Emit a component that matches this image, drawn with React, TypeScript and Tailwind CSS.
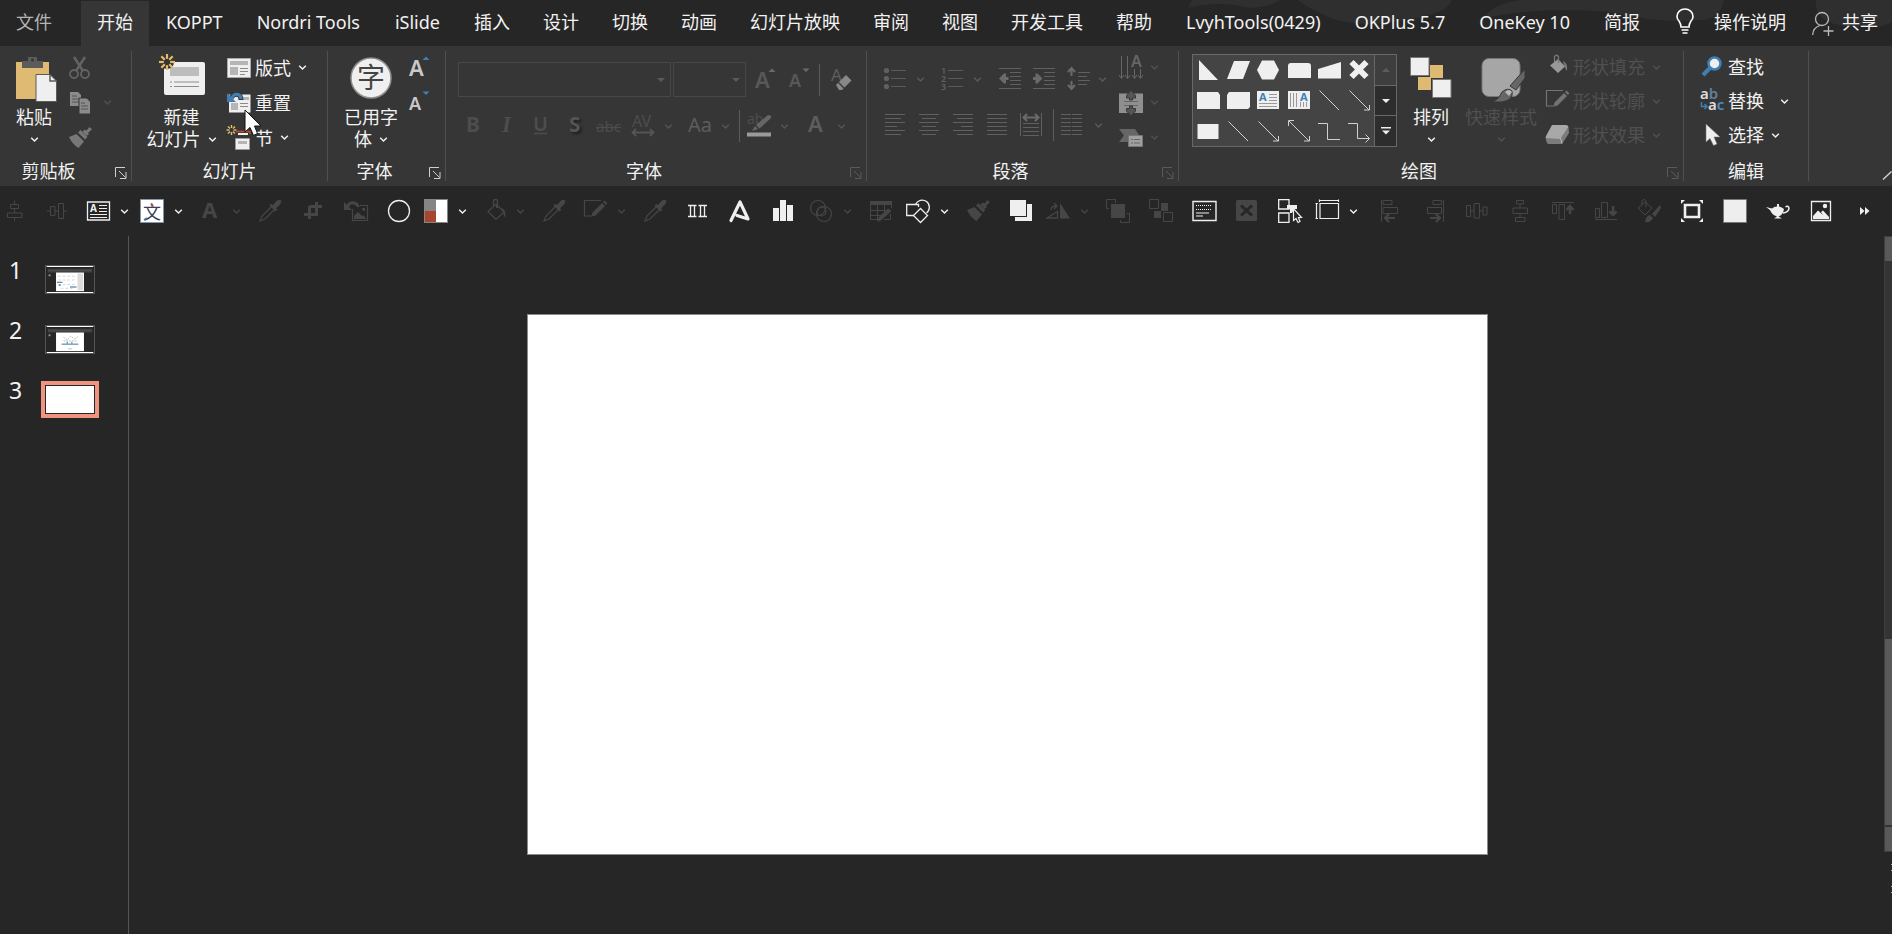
import { useState } from "react";
import type { ReactNode } from "react";

const TABS = [
  "文件", "开始", "KOPPT", "Nordri Tools", "iSlide", "插入", "设计", "切换", "动画", "幻灯片放映",
  "审阅", "视图", "开发工具", "帮助", "LvyhTools(0429)", "OKPlus 5.7", "OneKey 10", "简报",
];

const WIDE_TABS = ["Nordri Tools", "iSlide", "LvyhTools(0429)", "OneKey 10"];

interface IconProps {
  children: ReactNode;
  size?: number;
  w?: number;
  h?: number;
  className?: string;
}

function Icon({ children, size = 24, w, h, className = "" }: IconProps) {
  const width = w ?? size;
  const height = h ?? size;
  return (
    <svg
      width={width}
      height={height}
      viewBox={`0 0 ${width} ${height}`}
      fill="none"
      aria-hidden="true"
      className={`shrink-0 overflow-visible ${className}`}
    >
      {children}
    </svg>
  );
}

function Chevron({ className = "" }: { className?: string }) {
  return (
    <Icon w={9} h={5} className={className}>
      <path d="M1.2 .8L4.5 4L7.8 .8" stroke="currentColor" strokeWidth="1.5" />
    </Icon>
  );
}

/* ---------- shared glyphs ---------- */

const lines = (rows: [number, number, number][]) => (
  <path d={rows.map(([x1, x2, y]) => `M${x1} ${y}H${x2}`).join("")} stroke="currentColor" />
);

const eyedropper = (
  <>
    <path d="M14 7L4 17L2 22L7 20L17 10" stroke="currentColor" strokeWidth="1.2" />
    <path d="M11.5 6.5L13.3 4.7L14.8 6.2L18.5 2Q21-.2 23 1.3Q24.2 3.3 22 5.5L18 9.2L19.3 10.7L17.5 12.5Z" fill="currentColor" />
  </>
);

const brush = (
  <>
    <path d="M1 11L8.5 8L16 15.5L10.5 22Q4 18 1 11Z" fill="currentColor" />
    <path d="M10 6.5L12.5 4L19.5 11L17 13.5Z" fill="currentColor" />
    <path d="M14.5 5.5L17 3.5L18.3 4.8L21.5 1L24 3.2L20 7L21 8.5L18.5 9.8Z" fill="currentColor" />
  </>
);

const bucket = (
  <>
    <path d="M10 5L18 13L10 20.5L2 12.5Z" stroke="currentColor" strokeWidth="1.2" />
    <path d="M7.5 7V2Q7.5 .5 9.5 .5T11.5 2V9M10.5 6V9" stroke="currentColor" strokeWidth="1.3" />
    <path d="M15 8.5Q20 10 19.5 19L17.5 15.5V12Z" fill="currentColor" />
  </>
);

const outlinePencil = (
  <>
    <path d="M18 1.5H1.5V17H9" stroke="currentColor" strokeWidth="1.2" />
    <path d="M8.5 17.5L9.5 13.5L19 4L22 7L12.5 16.5ZM20 3L21.5 1.5L24.3 4.3L23 6Z" fill="currentColor" />
  </>
);

/* ---------- quick access bar ---------- */

interface QuickItem {
  label: string;
  icon: ReactNode;
  on?: boolean;
  drop?: boolean;
  gap?: boolean;
}

const QUICK: QuickItem[] = [
  {
    label: "垂直居中",
    icon: <path d="M12.5 1.5V5M12.5 10V14M12.5 19V22M8.5 5.5H16.5V9.5H8.5ZM5.5 14H20V18.5H5.5Z" stroke="currentColor" />,
  },
  {
    label: "横向分布",
    icon: <path d="M2 12H5M10 12H13.5M19 12H22M5.5 7.5H10V16.5H5.5ZM13.5 4.5H18.5V19.5H13.5Z" stroke="currentColor" />,
  },
  {
    label: "文本框", on: true, drop: true, gap: true,
    icon: (
      <>
        <path d="M1.5 3H23.5V21H1.5Z" stroke="currentColor" strokeWidth="1.3" />
        <text x="4" y="12.5" fontSize="10" fontWeight="700" fill="currentColor">A</text>
        {lines([[13, 21, 6.5], [13, 21, 9.5], [13, 21, 12.5], [4, 21, 15.5], [4, 21, 18.5]])}
      </>
    ),
  },
  {
    label: "文字", on: true, drop: true,
    icon: (
      <>
        <path d="M.5 .5H23.5V23.5H.5Z" fill="#fff" stroke="#8a94a8" />
        <text x="3" y="20" fontSize="18" fill="#33415c">文</text>
        <path d="M11 5L13 8" stroke="#c4472c" strokeWidth="1.5" />
        <path d="M7 19L4.5 20.5" stroke="#3f7fb5" strokeWidth="1.5" />
      </>
    ),
  },
  {
    label: "字体颜色", drop: true, gap: true,
    icon: <text x="4" y="19" fontSize="22" fontWeight="700" fill="currentColor">A</text>,
  },
  { label: "取色器", icon: eyedropper },
  {
    label: "裁剪",
    icon: <path d="M3 15.5H15.5V7M8.5 7V20M8.5 7.5H21M15.5 3V16" stroke="currentColor" strokeWidth="3" />,
  },
  {
    label: "重置图片",
    icon: (
      <>
        <path d="M3 9Q5 3 10 4Q14 5 14 8" stroke="currentColor" strokeWidth="3" />
        <path d="M0 3V11H8Z" fill="currentColor" />
        <path d="M16 6.5H23.5V21.5H8.5V10" stroke="currentColor" strokeWidth="1.2" />
        <path d="M10 20V17L14 13L18 17L19 16L22 19V20ZM18 9H21V12H19Z" fill="currentColor" />
      </>
    ),
  },
  { label: "椭圆", on: true, icon: <circle cx="12" cy="12" r="10.5" stroke="currentColor" strokeWidth="1.3" /> },
  {
    label: "配色", on: true, drop: true,
    icon: (
      <>
        <path d="M0 0H24V24H0Z" fill="#858585" />
        <path d="M12 1H23V23H12Z" fill="#fff" />
        <path d="M1 12H12V23H1Z" fill="#a8452f" />
      </>
    ),
  },
  { label: "形状填充", drop: true, gap: true, icon: <g transform="translate(4 0)">{bucket}</g> },
  { label: "取填充色", icon: eyedropper },
  { label: "形状轮廓", drop: true, gap: true, icon: outlinePencil },
  { label: "取轮廓色", icon: eyedropper },
  {
    label: "等距", on: true,
    icon: <path d="M2 6.5H10.5M12.5 6.5H21M2 17.5H10.5M12.5 17.5H21M4.5 6V18M8.500 6V18M14.500 6V18M18.500 6V18" stroke="currentColor" strokeWidth="1.3" />,
  },
  {
    label: "艺术字", on: true,
    icon: <path d="M2 21.5L11 3L19 20L8 16.5" stroke="currentColor" strokeWidth="3.2" strokeLinejoin="round" strokeLinecap="round" />,
  },
  {
    label: "图表", on: true,
    icon: <path d="M1 9H7V22H1ZM8 1H14V22H8ZM15 6H21V22H15Z" fill="currentColor" />,
  },
  {
    label: "合并形状", drop: true,
    icon: (
      <g stroke="currentColor" strokeWidth="1.2">
        <circle cx="9" cy="9" r="7.5" />
        <circle cx="15" cy="15" r="7.5" />
        <circle cx="12.5" cy="12.5" r="4.5" />
      </g>
    ),
  },
  {
    label: "绘制表格",
    icon: (
      <>
        <path d="M1 2H23V6H1Z" fill="currentColor" />
        <path d="M1.5 2.5V20.5H9M8.5 6V20M15.5 6V13M22.5 6V9M1 11.5H17M1 16.5H12M21.5 15V20.5H15" stroke="currentColor" />
        <path d="M8 23L9.5 18.5L19 9.5L22.5 12L12.5 21Z" fill="currentColor" />
      </>
    ),
  },
  {
    label: "形状", on: true, drop: true,
    icon: (
      <>
        <path d="M8 16.5H.7V5.5H12.5V8" stroke="currentColor" strokeWidth="1.3" />
        <path d="M9.5 5.5A7.2 7.2 0 1 1 20.5 14" stroke="currentColor" strokeWidth="1.3" />
        <path d="M14.5 9.5L21.5 16.5L14.5 23.5L7.5 16.5Z" stroke="currentColor" strokeWidth="1.3" />
      </>
    ),
  },
  { label: "格式刷", icon: brush },
  {
    label: "上移一层", on: true,
    icon: (
      <>
        <path d="M18 5H23V22H6V18H18Z" fill="currentColor" />
        <path d="M1 1H17V17H1Z" fill="currentColor" />
      </>
    ),
  },
  {
    label: "旋转", drop: true,
    icon: (
      <>
        <path d="M14 4L24 19.5H14Z" fill="currentColor" />
        <path d="M1 19L11.5 12.5V19ZM5 11Q5 7 10 7M8 4L11 7L8 10" stroke="currentColor" strokeWidth="1.3" />
      </>
    ),
  },
  {
    label: "组合",
    icon: (
      <>
        <path d="M5 5H19V19H5Z" fill="currentColor" />
        <path d="M3 9.5H.5V.5H9.5V4M21 14.5H23.5V23.5H14.5V21" stroke="currentColor" />
      </>
    ),
  },
  {
    label: "取消组合",
    icon: (
      <>
        <path d="M12 4H19V12H12ZM5 12H12V19H5Z" fill="currentColor" />
        <path d="M.5 .5H9.5V9.5H.5ZM14.5 13.5H23.5V22.5H14.5Z" stroke="currentColor" />
      </>
    ),
  },
  {
    label: "选项", on: true,
    icon: (
      <>
        <path d="M1 2.5H24V21.5H1Z" stroke="currentColor" strokeWidth="1.4" />
        <path d="M4 6.5H20M4 10.5H20" stroke="currentColor" strokeDasharray="1 1" />
        <path d="M4 14H17M4 17H11" stroke="currentColor" />
      </>
    ),
  },
  {
    label: "删除",
    icon: (
      <>
        <rect x="1" y="1" width="21" height="21" rx="1.5" fill="currentColor" />
        <path d="M6 6.5L17 16.5M17 6.5L6 16.5" stroke="#262626" strokeWidth="3" />
      </>
    ),
  },
  {
    label: "选择窗格", on: true,
    icon: (
      <>
        <path d="M.7 .7H11V10H.7ZM.7 14H11V23.3H.7Z" stroke="currentColor" strokeWidth="1.3" />
        <path d="M9 6H19V10H16L14 14H12V10H9Z" fill="currentColor" />
        <path d="M15.5 9.5V21.5L18 19.5L20 23.5L22 22.5L20.5 18.5H23.5Z" fill="#262626" stroke="currentColor" strokeWidth="1.2" />
      </>
    ),
  },
  {
    label: "尺寸", on: true, drop: true,
    icon: (
      <path d="M5 4.5H23.5V19.5H5ZM4.5 .5V3M23.5 .5V3M5 1.5H23M.5 4.5H3M.5 19.5H3M1.5 4.5V19.5" stroke="currentColor" strokeWidth="1.2" />
    ),
  },
  {
    label: "左对齐", gap: true,
    icon: (
      <>
        <path d="M2.5 1V23M4 1.5H13V5.5H4ZM4 8.5H18.5V14.5H4Z" stroke="currentColor" />
        <path d="M16 19H6M10 15L6 19L10 23" stroke="currentColor" strokeWidth="2.2" />
      </>
    ),
  },
  {
    label: "右对齐",
    icon: (
      <>
        <path d="M21.5 1V23M19.5 1.5H11V5.5H19.5ZM19.5 8.5H5.5V14.5H19.5Z" stroke="currentColor" />
        <path d="M8 19H18M14 15L18 19L14 23" stroke="currentColor" strokeWidth="2.2" />
      </>
    ),
  },
  {
    label: "水平分布",
    icon: (
      <path d="M1.5 6.5H5.5V17.5H1.5ZM9 4.5H14.5V19H9ZM18 8H22V16H18ZM5.5 12H9M14.5 12H18" stroke="currentColor" />
    ),
  },
  {
    label: "垂直分布",
    icon: (
      <path d="M8.5 1.5H15.5V5H8.5ZM5 9H19.5V14.5H5ZM7.5 18.5H17V22.5H7.5ZM12 5V9M12 14.5V18.5" stroke="currentColor" />
    ),
  },
  {
    label: "顶端对齐",
    icon: (
      <>
        <path d="M1 3.5H23M1.5 5.5H5.5V14.5H1.5ZM8 5.5H13.5V20.5H8Z" stroke="currentColor" />
        <path d="M19 15V7M15.5 11L19 7L22.5 11" stroke="currentColor" strokeWidth="2.5" />
      </>
    ),
  },
  {
    label: "底端对齐",
    icon: (
      <>
        <path d="M1 20.5H23M1.5 9.5H5.5V18.5H1.5ZM7.5 3.5H13.5V18.5H7.5Z" stroke="currentColor" />
        <path d="M19 7V16M15.5 12.5L19 16L22.5 12.5" stroke="currentColor" strokeWidth="2.5" />
      </>
    ),
  },
  {
    label: "复制格式",
    icon: (
      <>
        <path d="M8 3L15 9L8 16L1 9ZM5 6V1.500Q7.500 -1 9 2V8" stroke="currentColor" />
        <path d="M8 23Q9 17 13 16L16 19Q14 24 8 23ZM15 15L23 6L24 9L18 18Z" fill="currentColor" />
      </>
    ),
  },
  {
    label: "适应窗口", on: true,
    icon: (
      <>
        <path d="M5 6H19V18H5Z" stroke="currentColor" strokeWidth="2.6" />
        <path d="M1 1H5L1 5ZM23 1H19L23 5ZM1 23H5L1 19ZM23 23H19L23 19Z" fill="currentColor" />
      </>
    ),
  },
  {
    label: "矩形", on: true,
    icon: <path d="M.5 .5H23.5V23.5H.5Z" fill="#eee" stroke="#777" />,
  },
  {
    label: "神灯", on: true,
    icon: (
      <>
        <path d="M0 8L6 9.5Q8 7.500 11 7.500V5H13V7.500Q16 8 18 10Q17 16 12.500 17.500L16 19.500H8L11 17.500Q6 16 4 11Z" fill="currentColor" />
        <path d="M17 14Q23 13 23 9Q22 6 19.5 8" stroke="currentColor" strokeWidth="1.5" />
      </>
    ),
  },
  {
    label: "图片", on: true,
    icon: (
      <>
        <path d="M2.5 2.5H21.5V21.5H2.5Z" stroke="currentColor" strokeWidth="1.3" />
        <path d="M4 20V17L9 11.5L14 16L12 13L14 11.5L20 18V20Z" fill="currentColor" />
        <circle cx="16" cy="7" r="2.2" fill="currentColor" />
      </>
    ),
  },
  {
    label: "更多", on: true,
    icon: <path d="M8 8L12.5 12L8 16ZM13 8L17.5 12L13 16Z" fill="currentColor" />,
  },
];

function QuickBar() {
  return (
    <div className="flex h-[50px] shrink-0 items-center overflow-hidden bg-[#262626]">
      <div className="-ml-2 flex shrink-0 items-center">
        {QUICK.map((item) => (
          <button
            key={item.label}
            aria-label={item.label}
            disabled={!item.on}
            className={`flex h-8 shrink-0 items-center ${item.on ? "text-[#efefef]" : "text-[#464646]"} ${
              item.drop ? "w-[54px] gap-[10px] pl-1" : "w-[43px] justify-center"
            } ${item.gap ? "ml-1" : ""}`}
          >
            <Icon>{item.icon}</Icon>
            {item.drop && <Chevron />}
          </button>
        ))}
      </div>
    </div>
  );
}

/* ---------- ribbon building blocks ---------- */

interface GroupProps {
  label: string;
  className: string;
  labelClassName?: string;
  launcher?: "on" | "off";
  children: ReactNode;
}

function Group({ label, className, labelClassName = "", launcher, children }: GroupProps) {
  return (
    <section aria-label={label} className={`flex shrink-0 ${className}`}>
      <div className="flex min-w-0 flex-1 flex-col">
        <div className="flex h-[112px] pt-1">{children}</div>
        <div className="flex h-[26px] items-center">
          <span className={`flex-1 text-center ${labelClassName}`}>{label}</span>
          {launcher && (
            <button
              aria-label={`${label}设置`}
              className={`flex w-6 justify-end pt-1 pr-1 ${launcher === "on" ? "text-[#d0d0d0]" : "text-[#5a5a5a]"}`}
            >
              <Icon size={12}>
                <path d="M.5 10V.5H10M4 4L10.5 10.5M11 5V11.5H5" stroke="currentColor" />
              </Icon>
            </button>
          )}
        </div>
      </div>
      <div className="my-[5px] w-px bg-[#505050]" />
    </section>
  );
}

interface BigButtonProps {
  icon: ReactNode;
  lines: [string, string?];
  className: string;
  disabled?: boolean;
}

function BigButton({ icon, lines: [first, second], className, disabled }: BigButtonProps) {
  return (
    <button
      disabled={disabled}
      className={`flex shrink-0 flex-col items-center pt-1 leading-[22px] ${disabled ? "text-[#505050]" : ""} ${className}`}
    >
      <span className="flex h-[52px]">
        <Icon size={46}>{icon}</Icon>
      </span>
      <span className="whitespace-nowrap">{first}</span>
      <span className="flex h-[22px] items-center gap-[7px]">
        {second}
        <Chevron />
      </span>
    </button>
  );
}

interface RowButtonProps {
  icon: ReactNode;
  label?: string;
  name?: string;
  drop?: boolean;
  disabled?: boolean;
  className?: string;
}

function RowButton({ icon, label, name, drop, disabled, className = "h-[35px] gap-[7px]" }: RowButtonProps) {
  return (
    <button
      aria-label={name}
      disabled={disabled}
      className={`flex items-center whitespace-nowrap ${disabled ? "text-[#505050]" : ""} ${className}`}
    >
      <span className="flex items-center gap-1">
        <Icon>{icon}</Icon>
        {label}
      </span>
      {drop && <Chevron />}
    </button>
  );
}

interface ToolProps {
  name: string;
  children: ReactNode;
  drop?: boolean;
  className?: string;
}

function Tool({ name, children, drop, className = "" }: ToolProps) {
  return (
    <button
      aria-label={name}
      disabled
      className={`flex h-[34px] shrink-0 items-center gap-[9px] ${className || (drop ? "w-[57px]" : "w-[34px]")}`}
    >
      <Icon>{children}</Icon>
      {drop && <Chevron />}
    </button>
  );
}

function Divider() {
  return <div className="mr-[7px] h-8 w-px shrink-0 bg-[#5c5c5c]" />;
}

function ComboBox({ name, className }: { name: string; className: string }) {
  return (
    <div className={`relative ${className}`}>
      <select aria-label={name} disabled className="h-[35px] w-full appearance-none border border-[#474747] bg-transparent" />
      <Icon w={8} h={4} className="absolute top-4 right-[6px]">
        <path d="M0 0H8L4 4Z" fill="#5a5a5a" />
      </Icon>
    </div>
  );
}

/* ---------- ribbon groups ---------- */

function ClipboardGroup() {
  return (
    <Group label="剪贴板" launcher="on" className="w-[132px]" labelClassName="pr-[10px]">
      <BigButton
        className="w-[68px]"
        lines={["粘贴"]}
        icon={
          <>
            <path d="M5 8H38V45H5Z" fill="#dfba73" />
            <path d="M11 7H17V3H26V7H32V14H11Z" fill="#5b5b5b" />
            <circle cx="21.5" cy="6" r="1.5" fill="#363636" />
            <path d="M25 20.5H39L45.5 27V47.5H25Z" fill="#efefef" stroke="#5b5b5b" />
            <path d="M39 21V27H45" stroke="#5b5b5b" strokeWidth="1.5" />
          </>
        }
      />
      <div className="flex flex-col">
        <RowButton
          name="剪切"
          disabled
          icon={
            <g stroke="#636363">
              <path d="M6 1L15 15M17 1L8 15" strokeWidth="2.5" />
              <circle cx="6" cy="18" r="4" strokeWidth="1.8" />
              <circle cx="17" cy="18" r="4" strokeWidth="1.8" />
            </g>
          }
        />
        <RowButton
          name="复制"
          disabled
          drop
          className="h-[35px] gap-[11px]"
          icon={
            <>
              <path d="M2 1H10L13 4V15H2Z" fill="#8b8b8b" />
              <path d="M4 5H9M4 8H11M4 11H11" stroke="#555" />
              <path d="M11 7H19L22.5 11V23H11Z" fill="#8b8b8b" stroke="#363636" />
              <path d="M13 12H17M13 15H20M13 18H20" stroke="#555" />
            </>
          }
        />
        <RowButton name="格式刷" disabled icon={<g color="#777">{brush}</g>} />
      </div>
    </Group>
  );
}

const burst = (x: number, y: number, r: number) => (
  <g transform={`translate(${x} ${y})`} stroke="#e6bd6d" strokeWidth={r > 5 ? 2.2 : 1.4}>
    {[0, 45, 90, 135, 180, 225, 270, 315].map((a) => (
      <path key={a} d={`M0 ${-r * 0.4}V${-r}`} transform={`rotate(${a})`} />
    ))}
  </g>
);

function SlidesGroup() {
  return (
    <Group label="幻灯片" className="w-[196px]">
      <BigButton
        className="ml-1 w-[91px]"
        lines={["新建", "幻灯片"]}
        icon={
          <>
            <rect x="5" y="8" width="41" height="33" rx="2" fill="#efefef" />
            <path d="M11 13H40V22H11Z" fill="#bdbdbd" />
            <path d="M11 28H13M15 28H40M11 32.5H13M15 32.5H40" stroke="#8c8c8c" />
            <circle cx="8" cy="8" r="7" fill="#363636" />
            {burst(8, 8, 8)}
          </>
        }
      />
      <div className="relative flex flex-col">
        <RowButton
          label="版式"
          drop
          icon={
            <>
              <path d="M.5 2.5H23.5V21.5H.5Z" fill="#efefef" stroke="#aaa" />
              <path d="M3 5H21V9H3ZM3 11H11V19H3Z" fill="#b5b5b5" />
              <path d="M13 12.5H21M13 15.5H21M13 18.5H18" stroke="#8c8c8c" />
            </>
          }
        />
        <RowButton
          label="重置"
          icon={
            <>
              <path d="M2 3.5H23.5V21.5H2Z" fill="#efefef" />
              <path d="M15 6H22V9H15ZM4 12H11V19H4Z" fill="#b5b5b5" />
              <path d="M13 12.5H21M13 15.5H21" stroke="#8c8c8c" />
              <path d="M3 9Q6 2 11 3.5Q14 4.5 14 9" stroke="#363636" strokeWidth="5" />
              <path d="M4 8Q7 2 11 3.5Q14 4.5 14 8" stroke="#3f7fb5" strokeWidth="3" />
              <path d="M0 2V11H9Z" fill="#3f7fb5" />
            </>
          }
        />
        <RowButton
          label="节"
          drop
          icon={
            <>
              {burst(4.5, 4, 5)}
              <path d="M9 5.5H23V8" stroke="#c4472c" strokeWidth="1.5" />
              <path d="M11 7H21V9H11Z" fill="#efefef" />
              <path d="M8.5 12.5H22.5V23.5H8.5Z" fill="#efefef" stroke="#999" />
              <path d="M11 15H20V18H11Z" fill="#b5b5b5" />
            </>
          }
        />
        {/* mouse pointer hovering over the reset button */}
        <svg width="18" height="28" viewBox="0 0 18 28" aria-hidden="true" className="absolute top-[59px] left-[17px]">
          <path d="M1 1V23L6 18.5L9.5 26.5L13.5 24.5L10.5 17H17Z" fill="#fff" stroke="#111" />
        </svg>
      </div>
    </Group>
  );
}

const sizedA = (up: boolean, blue: boolean) => (
  <>
    <text x="0" y={up ? 20 : 19} fontSize={up ? 22 : 18} fontWeight="600" fill={blue ? "#c8c8c8" : "#585858"}>A</text>
    <path d={up ? "M13.5 4L17 .5L20.5 4Z" : "M13.5 .5L17 4L20.5 .5Z"} fill={blue ? "#3f7fb5" : "#6a6a6a"} />
  </>
);

function UsedFontsGroup() {
  return (
    <Group label="字体" launcher="on" className="w-[118px]">
      <BigButton
        className="ml-[5px] w-[76px]"
        lines={["已用字", "体"]}
        icon={
          <>
            <circle cx="23" cy="24" r="20" fill="#efefef" stroke="#8e8e8e" strokeWidth="1.5" />
            <text x="9" y="34" fontSize="28" fill="#444">字</text>
          </>
        }
      />
      <div className="flex flex-col">
        <RowButton name="增大字号" icon={sizedA(true, true)} />
        <RowButton name="减小字号" icon={sizedA(false, true)} />
      </div>
    </Group>
  );
}

function FontGroup() {
  return (
    <Group label="字体" launcher="off" className="w-[421px]">
      <div className="flex flex-col gap-3 pt-3 pl-3 text-[#555]">
        <div className="flex items-center gap-[2px]">
          <ComboBox name="字体名称" className="w-[213px]" />
          <ComboBox name="字号" className="w-[73px]" />
          <div className="ml-[7px] flex items-center">
            <Tool name="增大字号">{sizedA(true, false)}</Tool>
            <Tool name="减小字号" className="w-[30px]">{sizedA(false, false)}</Tool>
            <Divider />
            <Tool name="清除格式" className="ml-1 w-6">
              <text x="0" y="13" fontSize="17" fill="#5f5f5f">A</text>
              <path d="M5 17L15 7L20.5 12.5L11 22H8Z" fill="#888" />
              <path d="M7.5 14.5L13.5 20.5" stroke="#363636" strokeWidth="1.2" />
            </Tool>
          </div>
        </div>
        <div className="flex items-center pl-[3px]">
          <Tool name="加粗"><text x="5" y="18" fontSize="21" fontWeight="700" fill="#4d4d4d">B</text></Tool>
          <Tool name="倾斜">
            <text x="7" y="18" fontSize="23" fontWeight="700" fontStyle="italic" fontFamily="Liberation Serif, serif" fill="#4d4d4d">I</text>
          </Tool>
          <Tool name="下划线">
            <text x="4" y="17" fontSize="20" fontWeight="600" fill="#4d4d4d">U</text>
            <path d="M5 19.5H18" stroke="#4d4d4d" strokeWidth="1.5" />
          </Tool>
          <Tool name="阴影">
            <text x="6" y="18" fontSize="21" fontWeight="700" fill="#555" className="drop-shadow-[2px_2px_1px_#1f1f1f]">S</text>
          </Tool>
          <Tool name="删除线">
            <text x="-1" y="18" fontSize="15" fill="#4d4d4d">abc</text>
            <path d="M-1 13.5H24" stroke="#4d4d4d" />
          </Tool>
          <Tool name="字符间距" drop>
            <text x="1" y="13" fontSize="16" fill="#4d4d4d">AV</text>
            <path d="M2 18.5H22M5 15L1.5 18.5L5 22M19 15L22.5 18.5L19 22" stroke="#555" strokeWidth="1.8" />
          </Tool>
          <Tool name="更改大小写" drop className="w-[51px]">
            <text x="0" y="18" fontSize="20" fill="#5d5d5d">Aa</text>
          </Tool>
          <Divider />
          <Tool name="突出显示" drop>
            <text x="0" y="10" fontSize="14" fill="#4d4d4d">ab</text>
            <path d="M5 17L8 12L11 15ZM9 11L21 1Q25 1 24 4L12.5 14.5Z" fill="#666" />
            <path d="M0 20.500H24" stroke="#9a9a9a" strokeWidth="4" />
          </Tool>
          <Tool name="字体颜色" drop>
            <text x="4" y="18" fontSize="22" fontWeight="600" fill="#5d5d5d">A</text>
          </Tool>
        </div>
      </div>
    </Group>
  );
}

const paraLines = (widths: [number, number][]) => (
  <path d={widths.map(([a, b], i) => `M${a} ${1.5 + i * 4}H${b}`).join("")} stroke="#606060" />
);

function ParagraphGroup() {
  return (
    <Group label="段落" launcher="off" className="w-[312px]">
      <div className="flex w-[252px] flex-col gap-3 pt-3 pl-4 text-[#5a5a5a]">
        <div className="flex items-center">
          <Tool name="项目符号" drop>
            <path d="M8 3.5H23M8 11.5H23M8 19.5H23" stroke="#5a5a5a" />
            <g fill="#606060">
              <circle cx="3.5" cy="3.5" r="2.6" />
              <circle cx="3.5" cy="11.5" r="2.6" />
              <circle cx="3.5" cy="19.5" r="2.6" />
            </g>
          </Tool>
          <Tool name="编号" drop>
            <path d="M8 3.5H23M8 11.5H23M8 19.5H23" stroke="#5a5a5a" />
            <g fontSize="9" fontWeight="600" fill="#606060">
              <text x="1" y="6.5">1</text>
              <text x="1" y="14.5">2</text>
              <text x="1" y="22.5">3</text>
            </g>
          </Tool>
          <Tool name="减少缩进">
            <path d="M2 1.5H24M13 5.5H24M13 9.5H24M13 13.5H24M13 17.5H24M2 21.5H24" stroke="#606060" />
            <path d="M2 11.5L7 6.5H9V10H11.5V13H9V16.5H7Z" fill="#6a6a6a" />
          </Tool>
          <Tool name="增加缩进">
            <path d="M2 1.5H24M13 5.5H24M13 9.5H24M13 13.5H24M13 17.5H24M2 21.5H24" stroke="#606060" />
            <path d="M11.5 11.5L6.5 6.5H4.5V10H2V13H4.5V16.5H6.5Z" fill="#6a6a6a" />
          </Tool>
          <Tool name="行距" drop>
            <path d="M13 5.5H25M13 9.5H22M13 13.5H25M13 17.5H22" stroke="#606060" />
            <path d="M6.5 2V9M3 5L6.5 1L10 5M6.5 14V21M3 18L6.5 22L10 18" stroke="#6a6a6a" strokeWidth="2" />
          </Tool>
        </div>
        <div className="flex items-center">
          <Tool name="左对齐">{paraLines([[2, 22], [2, 18], [2, 22], [2, 14], [2, 22], [2, 18]])}</Tool>
          <Tool name="居中">{paraLines([[2, 22], [5, 19], [2, 22], [5, 19], [2, 22], [5, 19]])}</Tool>
          <Tool name="右对齐">{paraLines([[2, 22], [6, 22], [2, 22], [10, 22], [2, 22], [6, 22]])}</Tool>
          <Tool name="两端对齐">{paraLines([[2, 22], [2, 22], [2, 22], [2, 22], [2, 22], [2, 22]])}</Tool>
          <Tool name="分散对齐">
            <path d="M1.5 0V23M22.5 0V23M4 10.5H20M4 14.5H20M4 18.5H20M4 22.5H20" stroke="#606060" />
            <path d="M5 4.5H19M8 1L4.5 4.5L8 8M16 1L19.5 4.5L16 8" stroke="#6a6a6a" strokeWidth="2" />
          </Tool>
          <Divider />
          <Tool name="分栏" drop>
            <g>
              {paraLines([[0, 10], [0, 10], [0, 10], [0, 10], [0, 10], [0, 10]])}
              {paraLines([[11, 21], [11, 21], [11, 21], [11, 21], [11, 21], [11, 21]])}
            </g>
          </Tool>
        </div>
      </div>
      <div className="flex flex-col">
        <RowButton
          name="文字方向"
          disabled
          drop
          icon={
            <>
              <path d="M2.5 0V22M8.5 0V22M15.5 13V22M21.5 13V22M0 19L2.5 22.5L5 19M6 19L8.5 22.5L11 19M13 19L15.5 22.5L18 19M19 19L21.5 22.5L24 19" stroke="#666" />
              <text x="12" y="11" fontSize="16" fontWeight="600" fill="#666">A</text>
            </>
          }
        />
        <RowButton
          name="对齐文本"
          disabled
          drop
          icon={
            <>
              <path d="M0 2.5H24V22H0Z" fill="#8f8f8f" />
              <path d="M5 10.5H19M5 14.5H19" stroke="#666" />
              <path d="M12 -1L16.5 4.5V7H13.5V9H10.5V7H7.5V4.5ZM12 25L16.5 20V17.5H13.5V15H10.5V17.5H7.5V20Z" fill="#555" stroke="#363636" />
            </>
          }
        />
        <RowButton
          name="转换为 SmartArt"
          disabled
          drop
          icon={
            <>
              <path d="M0 3H16L20 9H10V16H0L5 9.5Z" fill="#666" />
              <path d="M9.5 9.5H23.5V20.5H9.5Z" fill="#a0a0a0" stroke="#777" />
              <path d="M12 13.5H14M15 13.5H21M12 17H14M15 17H21" stroke="#666" />
            </>
          }
        />
      </div>
    </Group>
  );
}

const SHAPES: { name: string; art: ReactNode }[] = [
  { name: "直角三角形", art: <path d="M3 2V22H22Z" fill="#efefef" /> },
  { name: "平行四边形", art: <path d="M8 3H24L17 21H1Z" fill="#efefef" /> },
  { name: "六边形", art: <path d="M6 2.5H18L23 12L18 21.5H6L1 12Z" fill="#efefef" /> },
  { name: "圆顶矩形", art: <path d="M1 20V8Q1 5 4 5H21Q24 5 24 8V20Z" fill="#efefef" /> },
  { name: "手动输入", art: <path d="M1 11L24 4V20.5H1Z" fill="#efefef" /> },
  { name: "乘号", art: <path d="M4.500 4L19.500 19M19.500 4L4.500 19" stroke="#efefef" strokeWidth="6" /> },
  { name: "单圆角矩形", art: <path d="M1 4H22L24 7V21H1Z" fill="#efefef" /> },
  { name: "对角圆角矩形", art: <path d="M3 4H24V19L22 21H1V7Z" fill="#efefef" /> },
  {
    name: "横排文本框",
    art: (
      <>
        <path d="M1 3H23V21H1Z" fill="#efefef" />
        <text x="3" y="13" fontSize="11" fontWeight="700" fill="#3f7fb5">A</text>
        <path d="M13 6.5H21M13 9.5H21M13 12.5H21M3 15.5H21M3 18.5H21" stroke="#999" />
      </>
    ),
  },
  {
    name: "竖排文本框",
    art: (
      <>
        <path d="M1 3H23V21H1Z" fill="#efefef" />
        <text x="13" y="13" fontSize="11" fontWeight="700" fill="#3f7fb5">A</text>
        <path d="M3.5 5V19M6.5 5V19M9.5 5V19M13.5 14V19M16.5 14V19M19.5 14V19" stroke="#999" />
      </>
    ),
  },
  { name: "直线", art: <path d="M2.5 2.5L22 22" stroke="#d0d0d0" /> },
  { name: "箭头", art: <path d="M2.5 2.5L22 22M17 22H22.5V17" stroke="#d0d0d0" /> },
  { name: "矩形", art: <path d="M1.5 5H22.5V20H1.5Z" fill="#efefef" /> },
  { name: "直线 2", art: <path d="M2.5 2.5L22 22" stroke="#d0d0d0" /> },
  { name: "箭头 2", art: <path d="M2.5 2.5L22 22M17 22H22.5V17" stroke="#d0d0d0" /> },
  { name: "双箭头", art: <path d="M2 2L22 22M17 22H22.5V17M1.5 7V1.5H7" stroke="#d0d0d0" /> },
  { name: "肘形连接符", art: <path d="M1 4.5H10.5V20.5H23" stroke="#d0d0d0" /> },
  { name: "肘形箭头", art: <path d="M1 4.5H10.5V19.5H22M18.5 15.5L22.5 19.5L18.5 23.5" stroke="#d0d0d0" /> },
];

function ShapeGallery() {
  return (
    <div className="mt-1 ml-[13px] flex h-[93px] w-[205px] shrink-0 border border-[#686868] bg-[#444]">
      <div className="grid flex-1 grid-cols-6 grid-rows-3">
        {SHAPES.map((shape) => (
          <button key={shape.name} aria-label={shape.name} className="flex items-center justify-center">
            <Icon>{shape.art}</Icon>
          </button>
        ))}
      </div>
      <div className="flex w-[22px] flex-col divide-y divide-[#686868] border-l border-[#686868]">
        <button aria-label="上一行" disabled className="flex flex-1 items-center justify-center bg-[#3e3e3e]">
          <Icon w={8} h={4}><path d="M0 4H8L4 0Z" fill="#5c5c5c" /></Icon>
        </button>
        <button aria-label="下一行" className="flex flex-1 items-center justify-center bg-[#2d2d2d]">
          <Icon w={8} h={4}><path d="M0 0H8L4 4Z" fill="#efefef" /></Icon>
        </button>
        <button aria-label="更多形状" className="flex flex-1 items-center justify-center bg-[#2d2d2d]">
          <Icon w={10} h={8}><path d="M0 0H10V1.5H0ZM1 3.5H9L5 7.5Z" fill="#efefef" /></Icon>
        </button>
      </div>
    </div>
  );
}

function DrawingGroup() {
  const row = "h-[34px] gap-[7px]";
  return (
    <Group label="绘图" launcher="off" className="w-[505px]">
      <ShapeGallery />
      <BigButton
        className="ml-1 w-[60px]"
        lines={["排列"]}
        icon={
          <>
            <path d="M22 11H35V24H22ZM10 23H23V36H10Z" fill="#dfba73" />
            <path d="M2.5 3.5H21V21.5H2.5ZM24.5 25.5H43V43.5H24.5Z" fill="#efefef" stroke="#777" />
          </>
        }
      />
      <BigButton
        disabled
        className="w-20"
        lines={["快速样式"]}
        icon={
          <>
            <rect x="4" y="4.5" width="38" height="38" rx="7" fill="#a6a6a6" stroke="#777" />
            <path d="M15 48Q22 44 24 38Q30 33 34 37Q36 46 24 48Z" fill="#666" stroke="#363636" />
            <path d="M27 38Q31 34 34 38L31 42Z" fill="#b8b8b8" />
            <path d="M32 32L47 15V24L38 36Z" fill="#666" stroke="#363636" />
          </>
        }
      />
      <div className="ml-1 flex flex-col">
        <RowButton
          label="形状填充"
          disabled
          drop
          className={row}
          icon={
            <>
              <path d="M13 4L20 11.5L13 18L5 10.5Z" fill="#999" />
              <path d="M9.5 7V1.5Q11 -1 13.5 1.5V8" stroke="#777" strokeWidth="1.3" />
              <path d="M18 6Q23 8 22 16L19.5 12Z" fill="#777" />
            </>
          }
        />
        <RowButton label="形状轮廓" disabled drop className={row} icon={<g color="#737373">{outlinePencil}</g>} />
        <RowButton
          label="形状效果"
          disabled
          drop
          className={row}
          icon={
            <>
              <path d="M7 2H21Q23 2 23.5 4L17 15L15 16H1.5Q0 16 1 13Z" fill="#a8a8a8" />
              <path d="M1 15L15 16L23.5 4L24 10L17 21H4Q1 21 1 15Z" fill="#7c7c7c" />
              <path d="M15.5 15L17 20.5" stroke="#bbb" />
            </>
          }
        />
      </div>
    </Group>
  );
}

function EditingGroup() {
  return (
    <Group label="编辑" className="w-[125px]">
      <div className="flex flex-col pl-4">
        <RowButton
          label="查找"
          className="h-[34px]"
          icon={
            <>
              <path d="M3 20L11 12" stroke="#3f7fb5" strokeWidth="4" />
              <circle cx="14.5" cy="8.5" r="6" fill="#efefef" stroke="#3f7fb5" strokeWidth="2.5" />
            </>
          }
        />
        <RowButton
          label="替换"
          drop
          className="h-[34px] gap-4"
          icon={
            <>
              <text x="0" y="10" fontSize="15" fontWeight="600" fill="#ddd">a<tspan fill="#5f7f9c">b</tspan></text>
              <text x="8" y="21" fontSize="15" fontWeight="600" fill="#ddd">a<tspan fill="#4d8fc4">c</tspan></text>
              <path d="M1.5 13V17.5H7M4.5 15L7 17.5L4.5 20" stroke="#3f7fb5" strokeWidth="1.5" />
            </>
          }
        />
        <RowButton
          label="选择"
          drop
          className="h-[34px] gap-[7px]"
          icon={<path d="M6 1V19L10 15.5L13.5 22.5L17 21L14 14H20Z" fill="#efefef" stroke="#777" strokeWidth=".6" />}
        />
      </div>
    </Group>
  );
}

function TabBar() {
  const [active, setActive] = useState("开始");
  return (
    <header className="relative flex h-[46px] shrink-0 items-stretch overflow-hidden bg-[#262626] pt-px">
      {/* faint title bar artwork */}
      <svg viewBox="0 0 712 46" aria-hidden="true" className="absolute top-0 right-0 h-[46px] w-[712px]" fill="#2f2f2f">
        <path d="M8 8Q40 0 70 8Q92 6 100 0H12Z" />
        <path d="M118 0Q130 10 156 20Q190 28 226 20Q268 14 272 0Z" />
        <path d="M304 18Q312 4 340 0H544Q540 20 520 20Q480 24 430 12Q360 6 304 18Z" />
        <path d="M636 0Q634 22 664 26Q700 30 712 22V0Z" />
      </svg>
      <nav className="relative flex gap-px">
        {TABS.map((tab) => (
          <button
            key={tab}
            onClick={() => setActive(tab)}
            className={`pb-[3px] whitespace-nowrap ${WIDE_TABS.includes(tab) ? "px-[17px]" : "px-4"} ${
              tab === active ? "bg-[#363636]" : ""
            } ${tab === "文件" ? "mr-3 text-[#b4b4b4]" : ""}`}
          >
            {tab}
          </button>
        ))}
      </nav>
      <button className="relative ml-5 flex items-center gap-5 pb-[3px] whitespace-nowrap">
        <Icon w={18} h={26}>
          <path d="M5 18Q5 15 3 12Q1 10 1 7.5A8 7.500 0 0 1 17 7.5Q17 10 15 12Q13 15 13 18ZM5.500 21H12.500M6.500 24H11.500" stroke="#fff" strokeWidth="1.6" />
        </Icon>
        操作说明
      </button>
      <button className="relative ml-auto flex items-center gap-2 pr-[14px] pb-[3px] whitespace-nowrap">
        <Icon w={22} h={24}>
          <circle cx="10" cy="9" r="6.5" stroke="#bbb" strokeWidth="1.3" />
          <path d="M.7 25Q1 17.5 8 15.5M16.5 16V26M11.5 21H21.5" stroke="#bbb" strokeWidth="1.3" />
        </Icon>
        共享
      </button>
    </header>
  );
}

/* ---------- slide panel and stage ---------- */

function MiniSlide({ variant }: { variant: 1 | 2 }) {
  return (
    <svg viewBox="0 0 50 29" aria-hidden="true" className="h-full w-full bg-[#262626]">
      <path d="M0 0H50V1H0ZM0 28H50V29H0Z" fill="#fff" />
      <path d="M1 3H49V7H1Z" fill="#404040" />
      <path d="M2 5H47" stroke="#5c5c5c" strokeDasharray="1 1" />
      <path d="M2 9H4V11H2Z" fill="#999" />
      <path d="M10 7H40V27H10Z" fill="#fff" />
      {variant === 1 ? (
        <>
          <path d="M33 8H39V26H33Z" fill="#dcdcdc" />
          <path d="M12 11H31M12 15H31M12 20H31M15 24H29" stroke="#d4d4d4" strokeDasharray="3 2" />
          <path d="M11 17.5H17M25 22.5H32M13 20.5H15" stroke="#2d6f96" strokeWidth="1.2" />
        </>
      ) : (
        <>
          <path d="M18 12L22 15L26 11L30 14L34 11M18 16H33" stroke="#bbb" strokeDasharray="2 1" fill="none" />
          <path d="M16 19.5H34M22 17V19M27 17V19" stroke="#2d6f96" />
          <path d="M23 24.5H27" stroke="#bbb" />
        </>
      )}
    </svg>
  );
}

function SlidePanel() {
  const [current, setCurrent] = useState(3);
  return (
    <aside className="flex w-[129px] shrink-0 flex-col border-r border-[#555] pt-5">
      {[1, 2, 3].map((n) => (
        <button key={n} onClick={() => setCurrent(n)} className="flex h-[60px] items-start pl-[9px] text-left">
          <span className="w-8 text-[23px] leading-7">{n}</span>
          <span className={`mt-[5px] block h-[37px] w-[58px] p-1 ${n === current ? "bg-[#f0937f]" : ""}`}>
            <span className={`block h-full border ${n === 3 ? "border-[#262626] bg-white" : "border-[#555]"}`}>
              {n !== 3 && <MiniSlide variant={n === 1 ? 1 : 2} />}
            </span>
          </span>
        </button>
      ))}
    </aside>
  );
}

function ScrollBar() {
  return (
    <div className="flex w-2 shrink-0 flex-col" aria-hidden="true">
      <div className="flex flex-1 flex-col border border-r-0 border-[#3e3e3e] bg-[#343434]">
        <div className="h-6 shrink-0 bg-[#595959]" />
        <div className="flex-[378]" />
        <div className="flex-[186] bg-[#595959]" />
        <div className="mt-[2px] h-6 shrink-0 bg-[#595959]" />
      </div>
      <Icon w={8} h={82}>
        <path d="M7 12.5H8M7 18.5H8M7 34.5H8M7 40.5H8" stroke="#aaa" />
      </Icon>
    </div>
  );
}

export default function App() {
  return (
    <div className="flex h-screen flex-col overflow-hidden bg-[#262626] font-['Noto_Sans','Noto_Sans_CJK_SC',sans-serif] text-[18px] leading-[22px] text-[#f2f2f2]">
      <TabBar />
      <div className="flex h-[140px] shrink-0 overflow-hidden bg-[#363636]">
        <ClipboardGroup />
        <SlidesGroup />
        <UsedFontsGroup />
        <FontGroup />
        <ParagraphGroup />
        <DrawingGroup />
        <EditingGroup />
        <button aria-label="折叠功能区" className="flex flex-1 items-end justify-end pb-[6px]">
          <Icon w={9} h={9}>
            <path d="M0 8.5L8.5 .5" stroke="#d0d0d0" strokeWidth="1.5" />
          </Icon>
        </button>
      </div>
      <QuickBar />
      <div className="flex min-h-0 flex-1">
        <SlidePanel />
        <main className="flex min-w-0 flex-1 items-center justify-center pb-px pl-[2px]">
          <div className="aspect-video w-[961px] max-w-full border border-[#8a8a8a] bg-white" />
        </main>
        <ScrollBar />
      </div>
    </div>
  );
}
